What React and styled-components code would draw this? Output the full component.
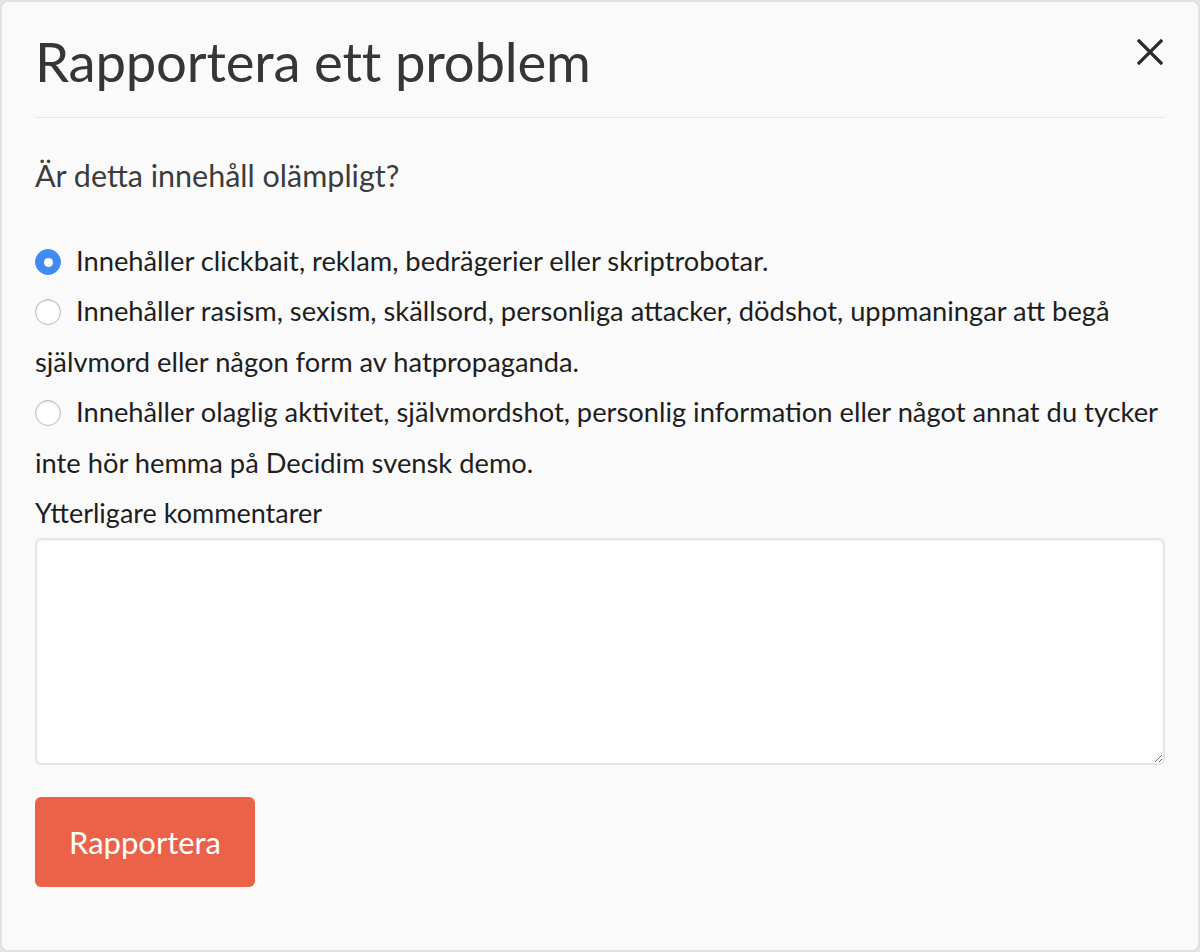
import React, {useState} from 'react';
import styled, {createGlobalStyle} from 'styled-components';

const GlobalStyle = createGlobalStyle`
  html, body {
    margin: 0;
    padding: 0;
    background: #e6e6e6;
  }
  * {
    box-sizing: border-box;
  }
`;

const Modal = styled.div`
  width: 1200px;
  height: 952px;
  background: #fafafa;
  border: 2px solid #e2e2e2;
  border-radius: 8px;
  padding: 0 33px;
  font-family: Lato, "Open Sans", sans-serif;
  color: #1e1e1e;
`;

const Header = styled.div`
  display: flex;
  justify-content: space-between;
  align-items: center;
  height: 116px;
  border-bottom: 1px solid #e6e6e6;
`;

const Title = styled.h2`
  margin: 0;
  padding-top: 2px;
  font-size: 54.5px;
  font-weight: 400;
  color: #363636;
  letter-spacing: -0.2px;
`;

const CloseButton = styled.button`
  border: none;
  background: none;
  padding: 0;
  margin-right: 0;
  margin-top: -16px;
  width: 30px;
  height: 30px;
  display: flex;
  align-items: center;
  justify-content: center;
  cursor: pointer;
`;

const Question = styled.p`
  margin: 39px 0 43px;
  font-size: 30.5px;
  line-height: 36px;
  color: #3c3c3c;
`;

const Option = styled.label`
  display: block;
  font-size: 27.3px;
  line-height: 50.4px;
  color: #1e1e1e;
  cursor: pointer;
`;

const Radio = styled.span`
  display: inline-block;
  vertical-align: -4px;
  width: 26px;
  height: 26px;
  margin-right: 15px;
  border-radius: 50%;
  background: ${p => (p.checked ? '#3e8bf3' : '#fff')};
  border: 1px solid ${p => (p.checked ? '#3e8bf3' : '#b9b9b9')};
  box-shadow: ${p => (p.checked ? 'none' : 'inset 0 1px 2px rgba(0,0,0,0.12)')};
  position: relative;

  &::after {
    content: '';
    display: ${p => (p.checked ? 'block' : 'none')};
    position: absolute;
    left: 50%;
    top: 50%;
    width: 9px;
    height: 9px;
    margin: -4.5px 0 0 -4.5px;
    border-radius: 50%;
    background: #fff;
  }
`;

const FieldLabel = styled.div`
  font-size: 27px;
  line-height: 50px;
  color: #1e1e1e;
`;

const TextArea = styled.textarea`
  display: block;
  width: 100%;
  height: 227px;
  margin-top: 0;
  border: 2px solid #e4e4e4;
  border-radius: 6px;
  background: #fff;
  box-shadow: inset 0 1px 2px rgba(0, 0, 0, 0.06);
  resize: vertical;
  font-family: inherit;
  font-size: 24px;
`;

const SubmitButton = styled.button`
  margin-top: 32px;
  width: 220px;
  height: 90px;
  border: none;
  border-radius: 6px;
  background: #ec6249;
  color: #fff;
  font-family: Lato, "Open Sans", sans-serif;
  font-size: 31px;
  cursor: pointer;
`;

const options = [
  'Innehåller clickbait, reklam, bedrägerier eller skriptrobotar.',
  'Innehåller rasism, sexism, skällsord, personliga attacker, dödshot, uppmaningar att begå självmord eller någon form av hatpropaganda.',
  'Innehåller olaglig aktivitet, självmordshot, personlig information eller något annat du tycker inte hör hemma på Decidim svensk demo.',
];

export default function App() {
  const [selected, setSelected] = useState(0);
  return (
    <>
      <GlobalStyle />
      <Modal>
        <Header>
          <Title>Rapportera ett problem</Title>
          <CloseButton aria-label="Stäng">
            <svg width="26" height="26" viewBox="0 0 26 26">
              <path d="M2 2 L24 24 M24 2 L2 24" stroke="#2b2b2b" strokeWidth="3.2" strokeLinecap="square" />
            </svg>
          </CloseButton>
        </Header>
        <Question>Är detta innehåll olämpligt?</Question>
        {options.map((text, i) => (
          <Option key={i} onClick={() => setSelected(i)}>
            <Radio checked={selected === i} />
            {text}
          </Option>
        ))}
        <FieldLabel>Ytterligare kommentarer</FieldLabel>
        <TextArea />
        <SubmitButton>Rapportera</SubmitButton>
      </Modal>
    </>
  );
}
